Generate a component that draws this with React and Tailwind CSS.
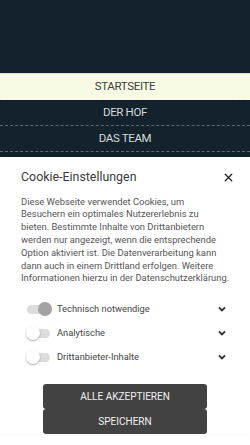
import { X } from 'lucide-react'

const options = [
  { label: 'Technisch notwendige', checked: true },
  { label: 'Analytische', checked: false },
  { label: 'Drittanbieter-Inhalte', checked: false },
]

function Toggle({ checked }) {
  return (
    <div className="relative w-[24px] h-[14px] flex items-center">
      <div className="w-[23px] h-[9px] rounded-full bg-[#dcdcdc]" />
      {checked ? (
        <div className="absolute right-[-1px] top-[0px] w-[14px] h-[14px] rounded-full bg-[#a3a3a3]" />
      ) : (
        <div className="absolute left-[-1px] top-[0px] w-[14px] h-[14px] rounded-full bg-white shadow-[0_1px_2px_rgba(0,0,0,0.35)]" />
      )}
    </div>
  )
}

function Chevron() {
  return (
    <svg width="8" height="6" viewBox="0 0 8 6" className="text-[#333]">
      <polyline points="1,1.5 4,4.5 7,1.5" fill="none" stroke="currentColor" strokeWidth="1.8" />
    </svg>
  )
}

export default function App() {
  return (
    <div className="w-[250px] h-[445px] overflow-hidden bg-white font-['Roboto','Liberation_Sans',Arial,sans-serif]">
      <div className="h-[157px] bg-[#13222d] flex flex-col">
        <div className="h-[73px]" />
        <nav className="flex flex-col text-[11.5px] tracking-[-0.03em] uppercase">
          <a className="h-[27px] flex items-center justify-center bg-[#f7fbe4] text-[#3a3f3f] border-t border-[#dfe6c8]">
            Startseite
          </a>
          <a className="h-[26px] flex items-center justify-center text-[#d6dbd6] border-t border-[#0e1a22] border-b border-dashed border-b-[#5b6b72]">
            Der Hof
          </a>
          <a className="h-[26px] flex items-center justify-center text-[#d6dbd6] border-b border-dashed border-[#5b6b72]">
            Das Team
          </a>
        </nav>
      </div>

      <div className="bg-white px-[21px] pt-[11px] shadow-[0_-2px_4px_rgba(0,0,0,0.15)] relative">
        <div className="flex items-center justify-between">
          <h2 className="text-[12.4px] text-[#3b3b3b]">Cookie-Einstellungen</h2>
          <button className="text-[#222] mr-[-6px]">
            <X className="w-[13px] h-[13px]" strokeWidth={2.4} />
          </button>
        </div>
        <p className="mt-[9px] mr-[-10px] whitespace-nowrap text-[9.4px] leading-[12.8px] text-[#555]">
          Diese Webseite verwendet Cookies, um<br />
          Besuchern ein optimales Nutzererlebnis zu<br />
          bieten. Bestimmte Inhalte von Drittanbietern<br />
          werden nur angezeigt, wenn die entsprechende<br />
          Option aktiviert ist. Die Datenverarbeitung kann<br />
          dann auch in einem Drittland erfolgen. Weitere<br />
          Informationen hierzu in der Datenschutzerklärung.
        </p>

        <div className="mt-[17px] flex flex-col gap-[10px] pl-[6px] pr-[3px]">
          {options.map((o) => (
            <div key={o.label} className="flex items-center h-[14px]">
              <Toggle checked={o.checked} />
              <span className="ml-[6px] flex-1 text-[9.3px] text-[#444]">{o.label}</span>
              <Chevron />
            </div>
          ))}
        </div>

        <div className="mt-[20px] mx-[22px] flex flex-col">
          <button className="h-[25px] rounded-[3px] bg-[#424242] text-[#f0f0f0] text-[10px] uppercase">
            Alle akzeptieren
          </button>
          <button className="h-[25px] rounded-[3px] bg-[#424242] text-[#f0f0f0] text-[10px] uppercase">
            Speichern
          </button>
        </div>
      </div>
    </div>
  )
}
